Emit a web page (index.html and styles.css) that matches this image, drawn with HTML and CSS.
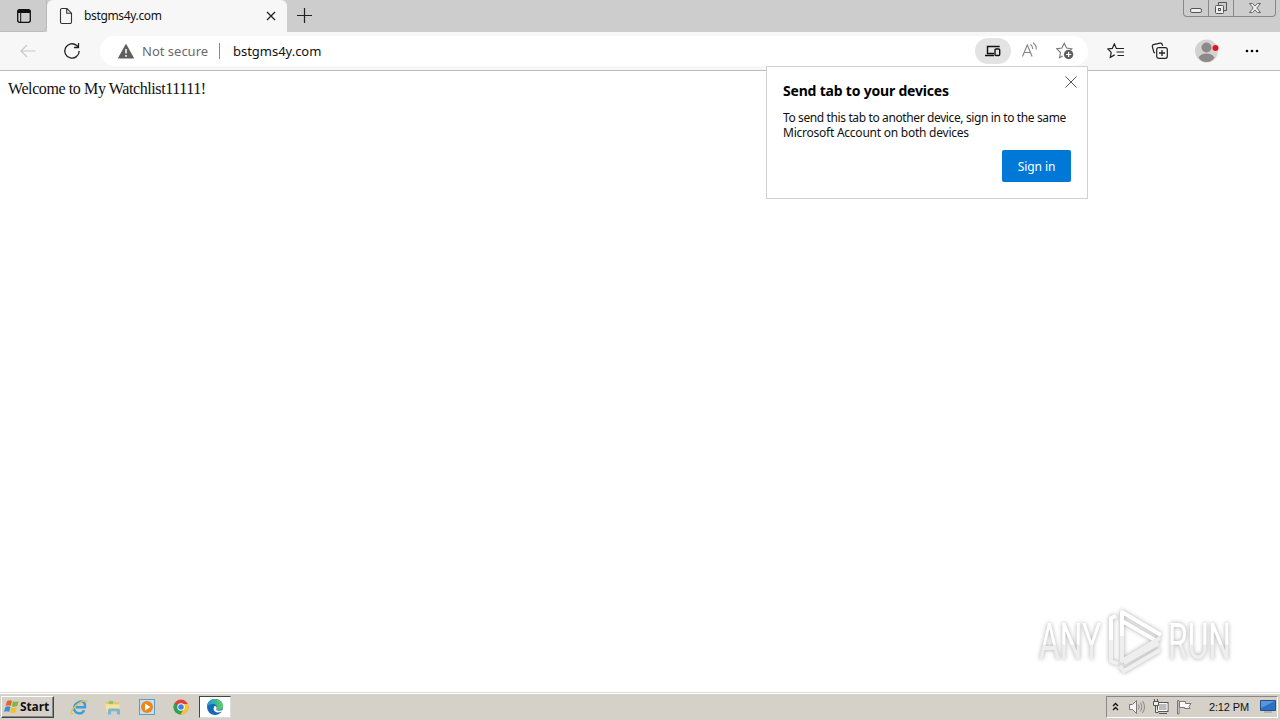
FILE: index.html
```html
<!DOCTYPE html>
<html lang="en">
<head>
    <meta charset="UTF-8">
    <title>bstgms4y.com</title>
    <link rel="stylesheet" href="styles.css">
</head>
<body>
    <div class="screen">
        <header class="tab-strip">
            <div class="tab-actions">
                <svg width="16" height="16" viewBox="0 0 16 16"><rect x="1.7" y="1.7" width="12.6" height="12.6" rx="2" fill="none" stroke="#111" stroke-width="1.3"/><path d="M1.5 5V3.5a2 2 0 0 1 2-2h9a2 2 0 0 1 2 2V5z" fill="#111"/><path d="M4.7 5v9" stroke="#111"/></svg>
            </div>
            <div class="tab">
                <svg width="14" height="18" viewBox="0 0 14 18"><path d="M3 1.5h5l4.5 4.6V15a1.5 1.5 0 0 1-1.5 1.5H3A1.5 1.5 0 0 1 1.5 15V3A1.5 1.5 0 0 1 3 1.500zM7.700 1.700v4.600h4.600" fill="none" stroke="#333" stroke-width="1.100"/></svg>
                <span class="tab-title">bstgms4y.com</span>
                <svg class="tab-close" width="10" height="10" viewBox="0 0 10 10"><path d="M1 1l8 8M9 1L1 9" stroke="#222" stroke-width="1.300"/></svg>
            </div>
            <svg class="new-tab" width="16" height="16" viewBox="0 0 16 16"><path d="M0 7.500h15M7.500 0v15" stroke="#222" stroke-width="1.200"/></svg>
            <div class="window-buttons">
                <span class="win-btn"><svg width="14" height="16" viewBox="0 0 14 16"><rect x="1.500" y="8.500" width="11" height="4" rx="1.500" fill="#eee" stroke="#555"/></svg></span>
                <span class="win-btn"><svg width="14" height="14" viewBox="0 0 14 14"><path d="M4.500 4V1.500h8v8H10" fill="none" stroke="#555"/><rect x="1.500" y="4.500" width="8" height="8" rx="1" fill="#eee" stroke="#555"/><rect x="4.500" y="7.500" width="2" height="2" fill="none" stroke="#555"/></svg></span>
                <span class="win-btn win-close"><svg width="14" height="12" viewBox="0 0 14 12"><path d="M1.500 1.500h3L7 4l2.500-2.500h3L8.800 6l3.700 4.500h-3L7 8l-2.500 2.500h-3L5.200 6z" fill="#eee" stroke="#666"/></svg></span>
            </div>
        </header>

        <nav class="toolbar">
            <svg class="back" width="16" height="14" viewBox="0 0 16 14"><path d="M15.500 7H1M7 1L1 7l6 6" fill="none" stroke="#c8c8c8" stroke-width="1.200"/></svg>
            <svg class="reload" width="18" height="18" viewBox="0 0 18 18"><path d="M16.200 9A7.200 7.200 0 1 1 13.700 3.500L15.500 5.300M15.500 1v4.500H11" fill="none" stroke="#222" stroke-width="1.300"/></svg>
            <div class="address-bar">
                <svg class="warning" width="16" height="15" viewBox="0 0 16 15"><path d="M8 .8L15.300 14H.7z" fill="#5f5f5f" stroke="#5f5f5f" stroke-width="1.200" stroke-linejoin="round"/><path d="M8 5v4.500M8 11v1.700" stroke="#fff" stroke-width="1.500"/></svg>
                <span class="not-secure">Not secure</span>
                <span class="divider"></span>
                <span class="url">bstgms4y.com</span>
                <div class="address-actions">
                    <span class="send-pill">
                        <svg width="16" height="12" viewBox="0 0 16 12"><path d="M9 8.500H2.500v-7h12.200M0 10.500h9" fill="none" stroke="#111" stroke-width="1.400"/><rect x="10" y="4" width="4.700" height="6.500" rx="1" fill="none" stroke="#111" stroke-width="1.400"/></svg>
                    </span>
                    <svg class="read-aloud" width="17" height="16" viewBox="0 0 17 16"><path d="M1.500 14.500L6.300 3l4.800 11.500M3.200 10.500h6.200M9.500 2.500q2.400 1.600 2.200 4.500M12 .8q3.700 2.500 3.200 6.700" fill="none" stroke="#858585" stroke-width="1.100"/></svg>
                    <svg width="18" height="18" viewBox="0 0 18 18"><path d="M6.700 14L3.500 15.700l1-5.200L.9 6.800l5-.7L8.300 1.300l2.300 4.800 5.200.7-1.600 1.600" fill="none" stroke="#777" stroke-width="1.100"/><circle cx="12.600" cy="12.500" r="4.700" fill="#5f5f5f"/><path d="M10 12.500h5.200M12.600 9.900v5.200" stroke="#fff" stroke-width="1.200"/></svg>
                </div>
            </div>
            <svg class="favorites" width="18" height="16" viewBox="0 0 18 16"><path d="M10.700 5.500L9.400 5.400 7.300.9 5.300 5.400.8 6l3.400 3.400-.9 4.900 4.400-2.400M10 5.500h7M9.500 9H17M10.500 12.500H17" fill="none" stroke="#222" stroke-width="1.200"/></svg>
            <svg class="collections" width="18" height="18" viewBox="0 0 18 18"><path d="M4 11L2.900 10.300 1.300 4.500q-.3-1.500 1-1.900l6.800-1.500q1.300-.3 2 1l.5 1.700" fill="none" stroke="#222" stroke-width="1.200"/><rect x="5.700" y="5.700" width="10.600" height="10.600" rx="2" fill="#f7f7f7" stroke="#222" stroke-width="1.200"/><path d="M8 11h6M11 8v6" stroke="#222" stroke-width="1.300"/></svg>
            <svg class="profile" width="24" height="24" viewBox="0 0 24 24"><circle cx="11.500" cy="12" r="11.500" fill="#d5d3d1"/><circle cx="11.500" cy="8.500" r="5" fill="#8c8a88"/><path d="M3.500 18.500q2.500-4 8-4t8 4q-3 4.500-8 4.500t-8-4.500" fill="#8c8a88"/><circle cx="20.500" cy="9" r="3" fill="#e81123"/></svg>
            <svg class="more" width="14" height="4" viewBox="0 0 14 4"><circle cx="2" cy="2" r="1.300"/><circle cx="7" cy="2" r="1.300"/><circle cx="12" cy="2" r="1.300"/></svg>
        </nav>

        <main class="page">
            <span class="welcome">Welcome to My Watchlist11111!</span>
        </main>

        <footer class="taskbar">
            <div class="start">
                <svg width="17" height="16" viewBox="0 0 17 16"><path d="M4 2q3-1.700 5 0L7.700 7q-2.500-1.400-5 0z" fill="#e8632c"/><path d="M10 2.300q3 1.200 5.700-.4L14.300 7q-2.700 1.500-5.500.3z" fill="#82b83d"/><path d="M2.400 8q2.600-1.500 5.100 0l-1.400 5q-2.500-1.500-5.100 0z" fill="#438dce"/><path d="M8.500 8.400q2.800 1.400 5.500-.2l-1.400 5q-2.500 1.500-5.500.2z" fill="#f3bf30"/></svg>
                <span class="start-text">Start</span>
            </div>
            <div class="task-icons">
                <span class="task"><svg width="18" height="18" viewBox="0 0 18 18"><path d="M14.300 12.300Q12 16 8.300 15.300C4 14.500 3 10 5 7s6.500-4.500 8.800-2.500Q15.500 6 15 9.200H6" fill="none" stroke="#3b9fda" stroke-width="2.400"/><path d="M3 15.500C-.5 18 1 12 5.500 8S17.500.5 16.500 4" fill="none" stroke="#e6c14c" stroke-width="1.300"/></svg></span>
                <span class="task"><svg width="18" height="18" viewBox="0 0 18 18"><path d="M2 4l5-1.500 1 1.500h7V14H2z" fill="#e5c76b"/><path d="M5 3h4v4H5z" fill="#8cc37b"/><path d="M1.500 6l14 .5V14h-13z" fill="#f6e39b"/><path d="M4 16.500v-4q0-2 2-2h8q2 0 2 2v4h-3v-3H7v3z" fill="#79b4dc"/></svg></span>
                <span class="task"><svg width="18" height="18" viewBox="0 0 18 18"><rect x="1.500" y="1.500" width="15" height="15" fill="#c4e2f3" stroke="#5b9cc4"/><circle cx="9" cy="9" r="6" fill="#f08519"/><path d="M7 5.500L12.500 9 7 12.500z" fill="#fff"/></svg></span>
                <span class="task"><svg width="16" height="16" viewBox="0 0 16 16"><circle cx="8" cy="8" r="7.500" fill="#e44133"/><path d="M8 8L1.400 4.500A7.500 7.500 0 0 0 7.500 15.500L11 10z" fill="#2da44f"/><path d="M8 5h6.900A7.500 7.500 0 0 1 7.500 15.500L11 10z" fill="#fac82c"/><circle cx="8" cy="8" r="3.700" fill="#fff"/><circle cx="8" cy="8" r="2.800" fill="#4081ed"/></svg></span>
                <span class="task active"><svg width="18" height="18" viewBox="0 0 18 18"><defs><linearGradient id="edge"><stop stop-color="#2097d8"/><stop offset="1" stop-color="#62d05b"/></linearGradient></defs><circle cx="9" cy="9" r="8" fill="#1669b7"/><path d="M1 9C1 4 4.500 1 9 1s8 3 8 7c0 3-2 4-4.500 4-2 0-3-.8-2-2 1.500-2-1-4-3.500-4S2 7 1 9z" fill="url(#edge)"/><path d="M10.300 10.400Q10 12.500 13 12.700q2 0 3.500-1l-1 2q-4 1.600-6.500-.2T8.500 8q3 .2 1.800 2.400z" fill="#fff"/></svg></span>
            </div>
            <div class="tray">
                <svg class="chevrons" width="7" height="9" viewBox="0 0 7 9"><path d="M1 4l2.500-2.500L6 4M1 8l2.500-2.500L6 8" fill="none" stroke="#111" stroke-width="1.300"/></svg>
                <svg class="speaker" width="18" height="16" viewBox="0 0 18 16"><path d="M1.500 5.500h3L8.500 1.500v13l-4-4h-3z" fill="#f5f5f5" stroke="#777"/><path d="M10.500 5.500q1.500 2.500 0 5M12.500 3.500q3 4.500 0 9M14.500 2q4 6 0 12" fill="none" stroke="#888"/></svg>
                <svg class="network" width="18" height="17" viewBox="0 0 18 17"><rect x="5.500" y="4.500" width="10.500" height="9" fill="#bbb" stroke="#555"/><path d="M6.500 12.500v-7h8.500v7z" fill="none" stroke="#fff"/><path d="M7 15.500h8" stroke="#555"/><path d="M1.500 3.500h5v4h-5zM2.500 1v2.500M5.500 1v2.500M3.500 7.500v7h3" fill="#eee" stroke="#555"/></svg>
                <svg class="flag" width="17" height="16" viewBox="0 0 17 16"><path d="M1.500 1.500h1.500V15H1.500z" fill="#fff" stroke="#777"/><path d="M3.500 2.500h6v2h5.500l-2 3 1 2H8.500v-1h-5z" fill="#fafafa" stroke="#777"/></svg>
                <span class="clock">2:12 PM</span>
                <svg class="desktop" width="16" height="13" viewBox="0 0 16 13"><path d="M.5.500h15v10H.500z" fill="#2c72c4" stroke="#285087"/><path d="M1 1h14L1 8z" fill="#5499dd"/><path d="M4 12h8" stroke="#8497ad"/></svg>
            </div>
        </footer>

        <section class="popup">
            <svg class="popup-close" width="12" height="12" viewBox="0 0 12 12"><path d="M.5.500l11 11M11.500.500l-11 11" stroke="#555"/></svg>
            <h1 class="popup-title">Send tab to your devices</h1>
            <p class="popup-text"><span class="line-one">To send this tab to another device, sign in to the same</span><br><span class="line-two">Microsoft Account on both devices</span></p>
            <button class="sign-in">Sign in</button>
        </section>

        <svg class="watermark" width="216" height="74" viewBox="0 0 216 74">
            <defs>
                <linearGradient id="fade" x2="0" y2="1"><stop offset=".53" stop-color="#fff"/><stop offset=".56" stop-color="#eee"/></linearGradient>
            </defs>
            <g class="mark">
                <text x="8" y="53" textLength="62" lengthAdjust="spacingAndGlyphs" fill="url(#fade)">ANY</text>
                <text x="137" y="53" textLength="63" lengthAdjust="spacingAndGlyphs" fill="url(#fade)">RUN</text>
                <g fill="none" stroke-width="4" stroke-linejoin="round">
                    <path d="M85 10l-5 2v43l7 3M89 60l4 5 36-21" stroke="#f0f0f0"/>
                    <path d="M80 34V12l5-2M91 30V6l39 23M91 15l33 19" stroke="#fff"/>
                    <path d="M91 30v25l38-23M93 57l35-20" stroke="#eee"/>
                </g>
            </g>
        </svg>
    </div>
</body>
</html>
```
FILE: styles.css
```css
* {
    box-sizing: border-box;
}

body {
    margin: 0;
    font-family: "Noto Sans", "Open Sans", sans-serif;
    color: #111;
}

svg {
    display: block;
    flex-shrink: 0;
}

.screen {
    position: relative;
    display: flex;
    flex-direction: column;
    width: 1280px;
    height: 720px;
    overflow: hidden;
    background: #fff;
}

.tab-strip {
    display: flex;
    height: 32px;
    background: #cdcdcd;
}

.tab-actions {
    width: 47px;
    padding: 8px 0 0 16px;
    border-right: 1px solid #b8b8b8;
    border-bottom: 1px solid #bbb;
    border-bottom-right-radius: 5px;
}

.tab {
    display: flex;
    align-items: center;
    width: 240px;
    padding: 0 11px 0 12px;
    background: #f7f7f7;
    border-radius: 6px 6px 0 0;
}

.tab-title {
    margin: -2px 0 0 11px;
    font-size: 12px;
    letter-spacing: -0.35px;
    white-space: nowrap;
}

.tab-close {
    margin-left: auto;
}

.new-tab {
    margin: 8px 0 0 10px;
}

.window-buttons {
    display: flex;
    width: 93px;
    height: 17px;
    margin: 0 4px 0 auto;
    border: 1px solid #888;
    border-top: 0;
    border-radius: 0 0 4px 4px;
}

.win-btn {
    display: flex;
    align-items: center;
    justify-content: center;
    width: 25px;
    border-right: 1px solid #888;
}

.win-close {
    flex: 1;
    border: 0;
}

.toolbar {
    display: flex;
    align-items: center;
    height: 39px;
    background: #f7f7f7;
    border-bottom: 1px solid #bbb;
}

.back {
    margin-left: 20px;
}

.reload {
    margin-left: 27px;
}

.address-bar {
    display: flex;
    align-items: center;
    width: 988px;
    height: 30px;
    margin-left: 19px;
    padding-left: 18px;
    background: #fff;
    border-radius: 15px;
    font-size: 14px;
    white-space: nowrap;
}

.not-secure {
    width: 69px;
    margin-left: 8px;
    color: #6b6b6b;
    font-size: 13px;
}

.divider {
    width: 1px;
    height: 16px;
    margin: 0 13px 0 8px;
    background: #888;
}

.url {
    font-size: 13px;
    letter-spacing: -0.02px;
}

.address-actions {
    display: flex;
    align-items: center;
    margin-left: auto;
    padding-right: 14px;
}

.send-pill {
    display: flex;
    align-items: center;
    justify-content: center;
    width: 36px;
    height: 26px;
    background: #e3e3e3;
    border-radius: 13px;
}

.read-aloud {
    margin: 0 18px 2px 10px;
}

.favorites {
    margin-left: 19px;
}

.collections {
    margin-left: 26px;
}

.profile {
    margin-left: 26px;
}

.more {
    margin-left: 26px;
}

.page {
    flex: 1;
    padding: 9px 8px;
    font-family: "Liberation Serif", serif;
    font-size: 16px;
    line-height: 18px;
}

.welcome {
    letter-spacing: -0.4px;
}

.taskbar {
    display: flex;
    align-items: center;
    height: 28px;
    padding: 1px 2px 1px 1px;
    background: #d5d1c9;
    border-top: 1px solid #dedbd5;
    box-shadow: inset 0 1px #fff;
}

.start {
    display: flex;
    align-items: center;
    width: 53px;
    height: 22px;
    padding-left: 1px;
    border: 1px solid;
    border-color: #fff #444 #444 #fff;
    box-shadow: inset -1px -1px #888;
}

.start-text {
    font: bold 12px "Open Sans", sans-serif;
    letter-spacing: -0.1px;
}

.task-icons {
    display: flex;
    gap: 2px;
    margin-left: 9px;
}

.task {
    display: flex;
    align-items: center;
    justify-content: center;
    width: 32px;
    height: 22px;
}

.active {
    background: #fff;
    border: 1px solid;
    border-color: #444 #ddd #ddd #444;
}

.tray {
    display: flex;
    align-items: center;
    width: 172px;
    height: 22px;
    margin-left: auto;
    padding-left: 5px;
    border: 1px solid;
    border-color: #888 #fff #fff #888;
}

.speaker {
    margin-left: 9px;
}

.network {
    margin-left: 6px;
}

.flag {
    margin-left: 6px;
}

.clock {
    width: 42px;
    margin-left: 16px;
    font: 11px "Liberation Sans", sans-serif;
    letter-spacing: -0.15px;
    white-space: nowrap;
}

.desktop {
    margin-left: 9px;
}

.popup {
    position: absolute;
    top: 66px;
    left: 766px;
    display: flex;
    flex-direction: column;
    width: 322px;
    height: 133px;
    padding: 14px 16px 16px;
    background: #fff;
    border: 1px solid #d2d2d2;
}

.popup-close {
    position: absolute;
    top: 9px;
    right: 10px;
}

.popup-title {
    margin: 0;
    color: #000;
    font-size: 14px;
    line-height: 19px;
    letter-spacing: -0.2px;
}

.popup-text {
    margin: 10px 0 0;
    font-size: 12px;
    line-height: 15px;
    white-space: nowrap;
}

.line-one {
    letter-spacing: -0.38px;
}

.line-two {
    letter-spacing: -0.24px;
}

.sign-in {
    align-self: flex-end;
    width: 69px;
    height: 32px;
    margin-top: 10px;
    padding: 0;
    background: #0078d7;
    border: 0;
    border-radius: 2px;
    color: #fff;
    font: 12px "Noto Sans", sans-serif;
    letter-spacing: -0.1px;
}

.watermark {
    position: absolute;
    top: 606px;
    left: 1031px;
}

.watermark text {
    font: 400 50px Roboto, sans-serif;
}

.mark {
    filter: drop-shadow(0 0 2px #aaa);
}
```
